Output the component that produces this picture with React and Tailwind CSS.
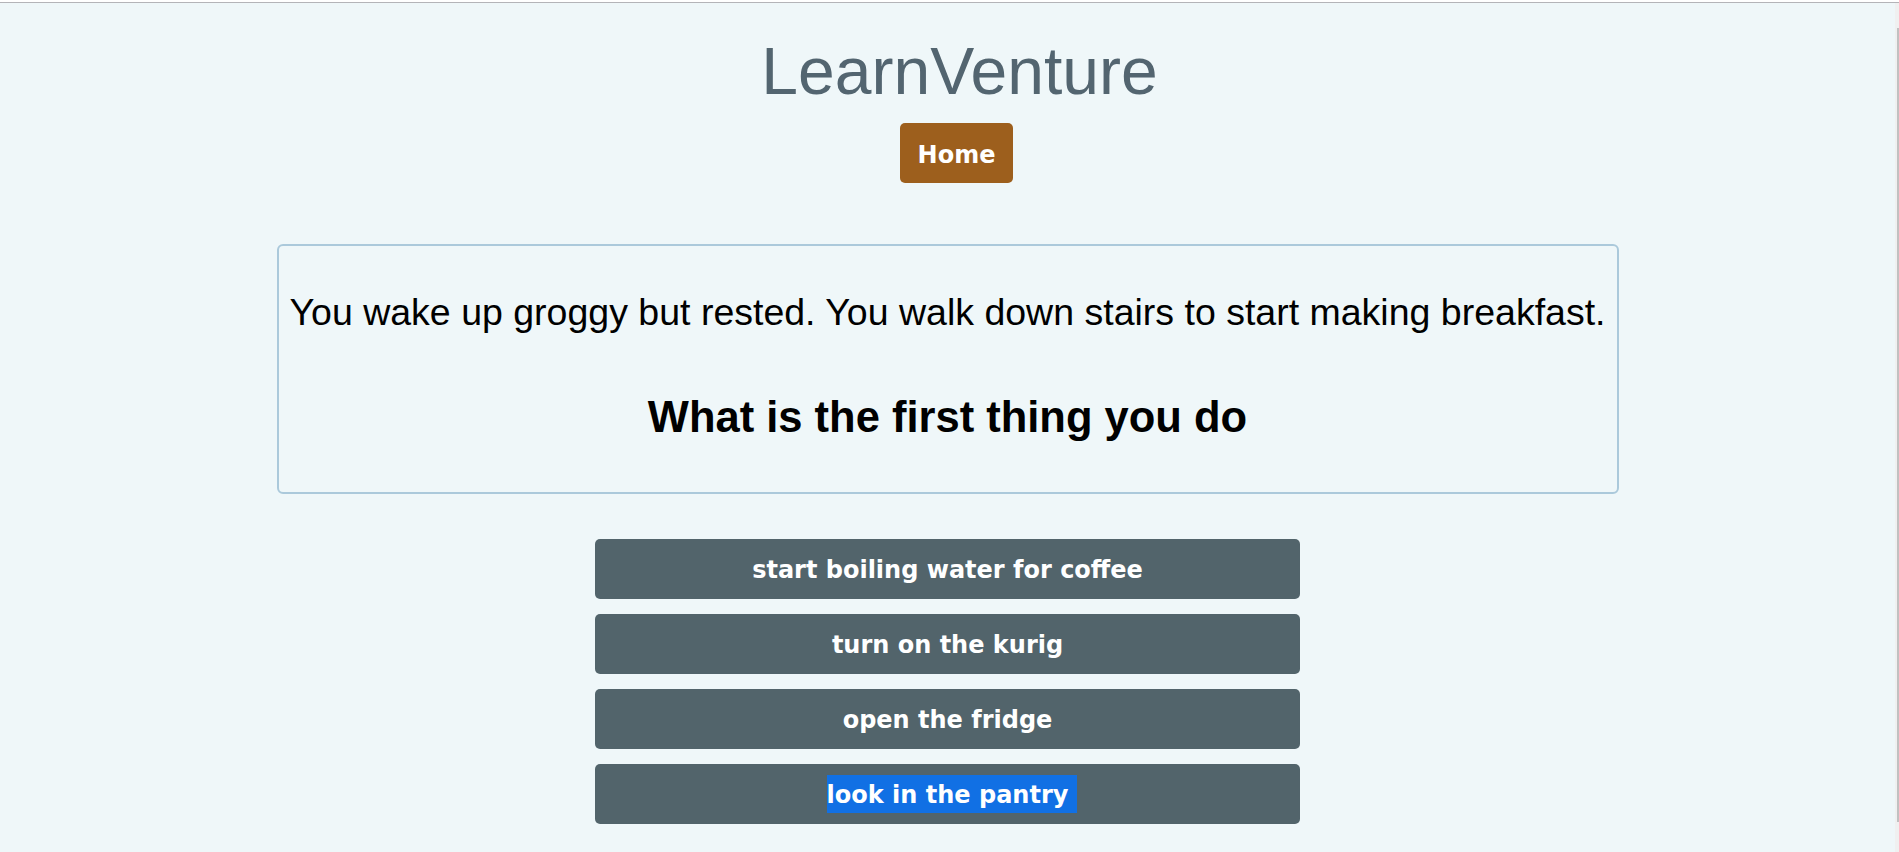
export default function App() {
  const choices = [
    "start boiling water for coffee",
    "turn on the kurig",
    "open the fridge",
  ];
  return (
    <div className="flex h-[852px] w-full flex-col overflow-hidden bg-white">
      <div className="h-[2px] w-full bg-white" />
      <div className="h-px w-full bg-[#b4b4b8]" />
      <div className="flex min-h-0 flex-1">
        <main className="flex min-w-0 flex-1 flex-col items-center bg-[#eff7f9] font-['Liberation_Sans',Arial,sans-serif]">
          <div className="flex w-full flex-col items-center pl-[18px] pt-[32px]">
            <h1 className="pl-[6px] text-[66px] font-normal leading-[72px] text-[#536570]">
              LearnVenture
            </h1>
            <button className="mt-[16px] flex h-[60px] w-[113px] items-center justify-center rounded-[5px] bg-[#9d5f1d] pt-[3px] font-['DejaVu_Sans',Verdana,sans-serif] text-[24px] font-bold leading-[28px] text-white">
              Home
            </button>
          </div>

          <section className="mt-[61px] flex w-[1342px] flex-col items-center rounded-[6px] border-2 border-[#abc9db] pb-[50px] pt-[45px] text-black">
            <p className="whitespace-nowrap text-[37.5px] leading-[42px]">
              You wake up groggy but rested. You walk down stairs to start making breakfast.
            </p>
            <h2 className="mt-[59px] whitespace-nowrap text-[43.5px] font-bold leading-[50px]">
              What is the first thing you do
            </h2>
          </section>

          <div className="mt-[45px] flex w-[705px] flex-col gap-[15px] font-['DejaVu_Sans',Verdana,sans-serif]">
            {choices.map((c) => (
              <button
                key={c}
                className="flex h-[60px] w-full items-center justify-center rounded-[5px] bg-[#52646b] pt-[2px] text-[24px] font-bold leading-[36px] text-white"
              >
                {c}
              </button>
            ))}
            <button className="flex h-[60px] w-full items-center justify-center rounded-[5px] bg-[#52646b] text-[24px] font-bold leading-[36px] text-white">
              <span className="mr-[-9px] bg-[#1170e4] pr-[9px] pt-[2px]">look in the pantry</span>
            </button>
          </div>
        </main>
        <div className="w-[4px] shrink-0 bg-[#f0f0f0]">
          <div className="ml-[2px] mt-[25px] h-[794px] w-[2px] bg-[#c1c1c1]" />
        </div>
      </div>
    </div>
  );
}
